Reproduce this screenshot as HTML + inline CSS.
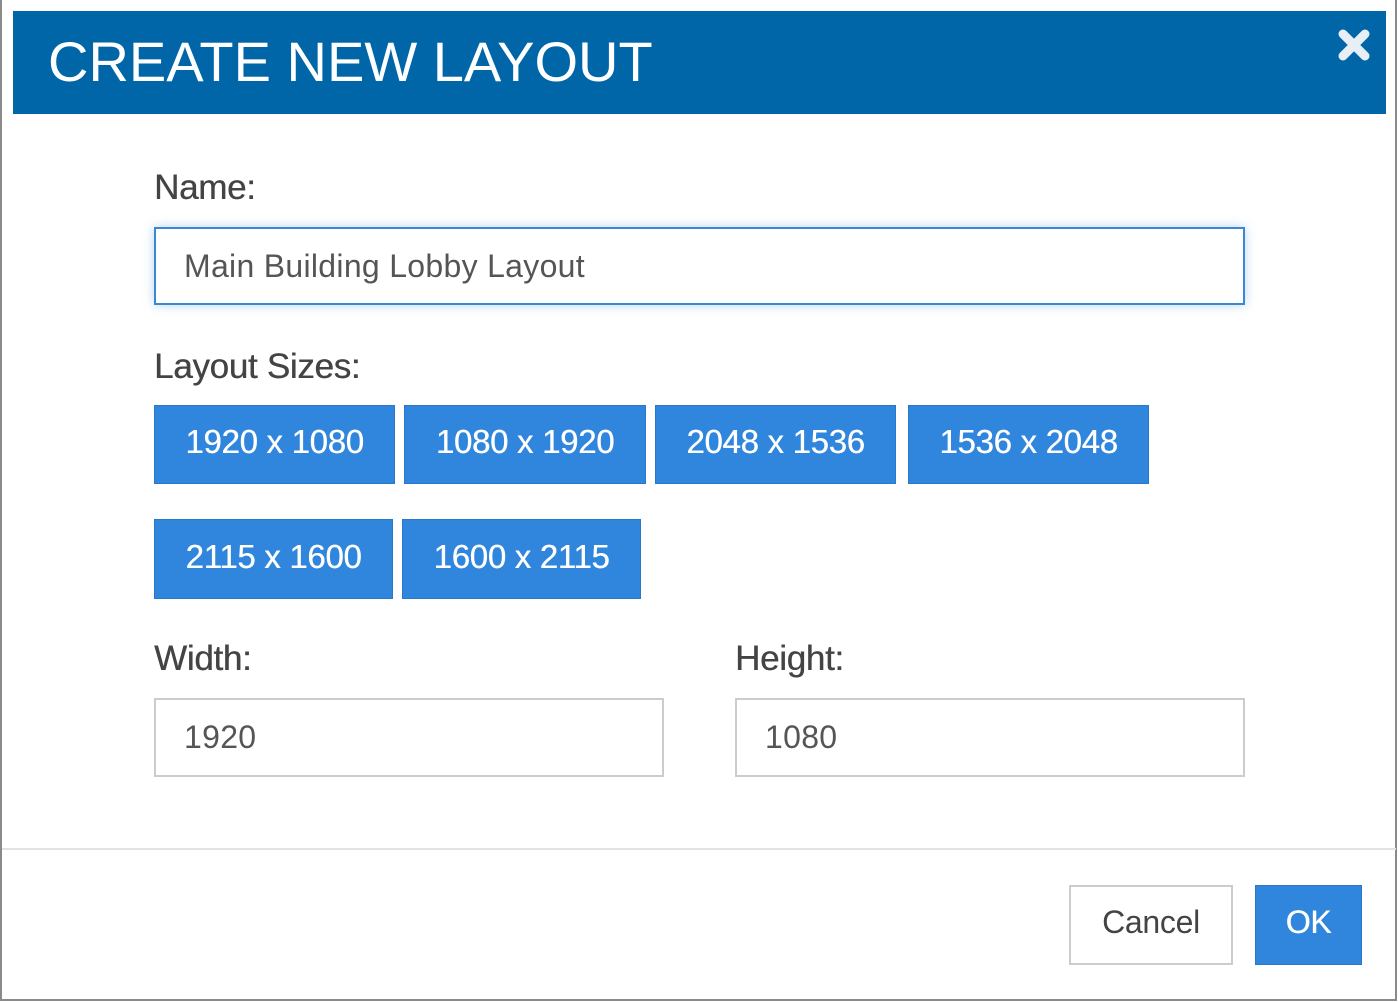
<!DOCTYPE html>
<html><head><style>
*{margin:0;padding:0;box-sizing:border-box}
body{width:1398px;height:1002px;background:#fff;font-family:"Liberation Sans",Arial,sans-serif;position:relative;overflow:hidden}
.frame{position:absolute;left:0;top:0;width:1397px;height:1001px;border-left:2px solid #8a8a8a;border-right:2px solid #8a8a8a;border-bottom:2px solid #8a8a8a}
.hdr{position:absolute;left:13px;top:11px;width:1373px;height:103px;background:#0066a8}
.hdr h1{position:absolute;left:35px;top:21px;font-weight:normal;font-size:56px;color:#fff;line-height:60px;letter-spacing:0}
.x{position:absolute;left:1324px;top:17px}
.lbl{position:absolute;font-size:35px;color:#444;line-height:36px;letter-spacing:-0.3px;text-shadow:0.4px 0 0 #444}
.inp{position:absolute;border:2px solid #ccc;background:#fff;font-size:32px;color:#555;padding-left:28px;display:flex;align-items:center;letter-spacing:0.3px}
.focus{border-color:#3a87d6;box-shadow:0 0 10px rgba(58,135,214,.35)}
.b{position:absolute;background:#3085dc;border:1px solid #2a78c8;color:#fff;font-size:33px;display:flex;align-items:center;justify-content:center;letter-spacing:-0.3px;text-shadow:0.4px 0 0 #fff;padding-bottom:5px}
.sep{position:absolute;left:2px;top:848px;width:1394px;height:2px;background:#e2e2e2}
</style></head><body>
<div class="frame"></div>
<div class="hdr"><h1>CREATE NEW LAYOUT</h1>
<svg class="x" width="34" height="34" viewBox="0 0 34 34"><path d="M6 6 L28 28 M28 6 L6 28" stroke="#e8eef5" stroke-width="9" stroke-linecap="round"/></svg>
</div>
<div class="lbl" style="left:154px;top:170px">Name:</div>
<div class="inp focus" style="left:154px;top:227px;width:1091px;height:78px">Main Building Lobby Layout</div>
<div class="lbl" style="left:154px;top:349px">Layout Sizes:</div>
<div class="b" style="left:154px;top:405px;width:241px;height:79px">1920 x 1080</div>
<div class="b" style="left:404px;top:405px;width:242px;height:79px">1080 x 1920</div>
<div class="b" style="left:655px;top:405px;width:241px;height:79px">2048 x 1536</div>
<div class="b" style="left:908px;top:405px;width:241px;height:79px">1536 x 2048</div>
<div class="b" style="left:154px;top:519px;width:239px;height:80px">2115 x 1600</div>
<div class="b" style="left:402px;top:519px;width:239px;height:80px">1600 x 2115</div>
<div class="lbl" style="left:154px;top:641px">Width:</div>
<div class="lbl" style="left:735px;top:641px">Height:</div>
<div class="inp" style="left:154px;top:698px;width:510px;height:79px">1920</div>
<div class="inp" style="left:735px;top:698px;width:510px;height:79px">1080</div>
<div class="sep"></div>
<div class="b" style="left:1069px;top:885px;width:164px;height:80px;background:#fff;border:2px solid #ccc;color:#444;font-size:32px;text-shadow:none">Cancel</div>
<div class="b" style="left:1255px;top:885px;width:107px;height:80px;font-size:32px">OK</div>
</body></html>
